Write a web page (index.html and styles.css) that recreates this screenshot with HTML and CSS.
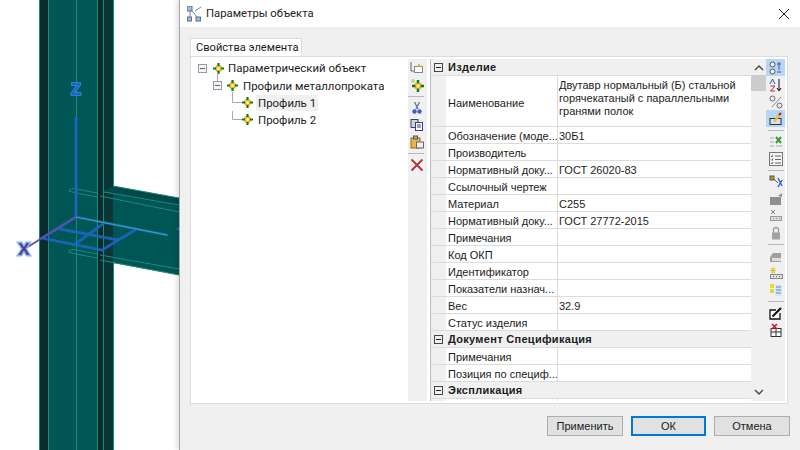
FILE: index.html
```html
<!DOCTYPE html>
<html lang="ru">
<head>
<meta charset="utf-8">
<title>Параметры объекта</title>
<link rel="stylesheet" href="styles.css">
</head>
<body>
<svg width="0" height="0" class="defs">
  <symbol id="node" viewBox="0 0 11 11">
    <circle cx="5.500" cy="5.500" r="3.500" fill="#f0b020"/>
    <circle cx="5.500" cy="5.500" r="1.500" fill="#fff4b8"/>
    <path d="M5.500 0v3M5.500 8v3M0 5.500h3M8 5.500h3" stroke="#0a7a1c" stroke-width="2.200"/>
  </symbol>
  <symbol id="minus" viewBox="0 0 9 9">
    <rect x=".5" y=".5" width="8" height="8" fill="#f2f4f7" stroke="#9a9a9a"/>
    <path d="M2 4.500h5" stroke="#4a6a9a"/>
  </symbol>
</svg>

<div class="app">
  <svg class="scene" viewBox="0 0 179 450" width="179" height="450">
    <rect x="39" y="0" width="75" height="450" fill="#005555"/>
    <rect x="40" y="0" width="8" height="450" fill="#0a2c2b"/>
    <rect x="98" y="0" width="5" height="450" fill="#0a2c2b"/>
    <rect x="104" y="0" width="9" height="450" fill="#0a3735"/>
    <polygon points="113,186 179,198 179,275 113,263" fill="#005555"/>
    <polygon points="103,192 113,186 179,198 179,206" fill="#00494a"/>
    <g stroke="#1d8a80" fill="none" stroke-width="1">
      <path d="M39.500 0V450M48.500 0V450M76.500 0V450M97.500 0V450M103.500 0V450M113.500 0V186M113.500 263V450"/>
      <path d="M113 186L179 198M100 196L179 212M104 192L179 205"/>
      <path d="M97 193L74 188.500Q68 189 69 191L76 193L97 197"/>
      <path d="M97 254L74 249.500Q68 250 69 252L76 254L97 258"/>
      <path d="M100 255L179 269M100 260L179 275"/>
    </g>
    <g stroke="#1d67c8" fill="none" stroke-width="2.800" opacity=".85" stroke-linecap="round">
      <path d="M76 118V217"/>
      <path d="M76 217L42 238L102 250L135 230"/>
      <path d="M60 229L118 240M74 245L104 223"/>
      <path d="M76 217L167 235"/>
    </g>
    <path d="M76 217L167 235" stroke="#35b09a" fill="none"/>
    <path d="M76 217L26 248" stroke="#6a4aa8" fill="none" stroke-width="1.800"/>
    <circle cx="178" cy="229" r="1.500" fill="#1d67c8"/>
    <text x="76" y="95" class="label-z">Z</text>
    <text x="24" y="255" class="label-x">X</text>
  </svg>

  <div class="dialog">
    <header class="titlebar">
      <svg class="title-icon" viewBox="0 0 15 16">
        <rect x="0" y="0" width="5" height="5" fill="#a9bad6" stroke="#5b6f94"/>
        <rect x=".5" y="11" width="4" height="4" fill="#a9bad6" stroke="#5b6f94"/>
        <rect x="9" y="11" width="4.500" height="4" fill="#a9bad6" stroke="#5b6f94"/>
        <path d="M3 5V11M5 5L10 11M8 5L14 1" stroke="#6d7fa0" fill="none"/>
      </svg>
      <span class="title-text">Параметры объекта</span>
      <svg class="close" viewBox="0 0 10 10"><path d="M0 0L10 10M10 0L0 10" stroke="#222" fill="none"/></svg>
    </header>

    <div class="content">
      <div class="tab">Свойства элемента</div>
      <div class="panel">
        <div class="tree">
          <div class="tree-row">
            <svg class="prefix p-root" viewBox="0 0 25 17">
              <use href="#minus" x="0" y="4" width="9" height="9"/>
              <use href="#node" x="15" y="3" width="11" height="11"/>
            </svg>
            <span class="node">Параметрический объект</span>
          </div>
          <div class="tree-row">
            <svg class="prefix p-group" viewBox="0 0 40 17">
              <path d="M19.500 -5V4" stroke="#aaa"/>
              <use href="#minus" x="15" y="4" width="9" height="9"/>
              <use href="#node" x="29" y="3" width="11" height="11"/>
            </svg>
            <span class="node">Профили металлопроката</span>
          </div>
          <div class="tree-row">
            <svg class="prefix p-leaf" viewBox="0 0 55 17">
              <path d="M34.500 -2V8.500H44" stroke="#aaa" fill="none"/>
              <use href="#node" x="44" y="3" width="11" height="11"/>
            </svg>
            <span class="node selected">Профиль 1</span>
          </div>
          <div class="tree-row">
            <svg class="prefix p-leaf" viewBox="0 0 55 17">
              <path d="M34.500 0V8.500H44" stroke="#aaa" fill="none"/>
              <use href="#node" x="44" y="3" width="11" height="11"/>
            </svg>
            <span class="node">Профиль 2</span>
          </div>
        </div>

        <div class="toolbar tb-left">
          <div class="slot"><svg viewBox="0 0 14 14"><path d="M1 1V10H4" stroke="#666" fill="none"/><rect x="4.500" y="5.500" width="8" height="6" fill="#fff" stroke="#888"/><path d="M8 6l1-3 1 3 2-1" stroke="#c8b020" fill="none"/></svg></div>
          <div class="slot"><svg viewBox="0 0 14 14"><use href="#node" x="2" y="2" width="12" height="12"/><circle cx="3" cy="3" r="2" fill="#cfcf90"/></svg></div>
          <div class="sep"></div>
          <div class="slot"><svg viewBox="0 0 14 14"><path d="M4.500 1L8 8M9.500 1L6 8" stroke="#6a7a96" stroke-width="1.400" fill="none"/><circle cx="4.500" cy="10.500" r="2.200" fill="#3f5fc0"/><circle cx="9.500" cy="10.500" r="2.200" fill="#3f5fc0"/></svg></div>
          <div class="slot"><svg viewBox="0 0 14 14"><rect x="1" y="1.500" width="7" height="8" fill="#cfd4dc" stroke="#444"/><rect x="5.500" y="4.500" width="7" height="8" fill="#fff" stroke="#2a3f9a"/><path d="M7 7h4M7 9h4" stroke="#2a3f9a"/></svg></div>
          <div class="slot"><svg viewBox="0 0 14 14"><rect x="1" y="3" width="9" height="10" fill="#e6b84a" stroke="#8a6a20"/><rect x="3.500" y="1" width="4" height="3" fill="#aaa" stroke="#555"/><rect x="6.500" y="7" width="7" height="6" fill="#eee" stroke="#666"/></svg></div>
          <div class="sep"></div>
          <div class="slot"><svg viewBox="0 0 14 14"><path d="M1.500 1.500L12.500 12.500M12.500 1.500L1.500 12.500" stroke="#b03034" stroke-width="1.800" fill="none"/></svg></div>
        </div>

        <div class="grid">
          <div class="row head"><span class="gutter"><svg class="exp" viewBox="0 0 9 9"><rect x=".5" y=".5" width="8" height="8" fill="none" stroke="#444"/><path d="M2 4.500h5" stroke="#222"/></svg></span><span class="head-title">Изделие</span></div>
          <div class="row tall"><span class="gutter"></span><span class="name">Наименование</span><span class="val multi">Двутавр нормальный (Б) стальной горячекатаный с параллельными гранями полок</span></div>
          <div class="row"><span class="gutter"></span><span class="name">Обозначение (моде...</span><span class="val">30Б1</span></div>
          <div class="row"><span class="gutter"></span><span class="name">Производитель</span><span class="val"></span></div>
          <div class="row"><span class="gutter"></span><span class="name">Нормативный доку...</span><span class="val">ГОСТ 26020-83</span></div>
          <div class="row"><span class="gutter"></span><span class="name">Ссылочный чертеж</span><span class="val"></span></div>
          <div class="row"><span class="gutter"></span><span class="name">Материал</span><span class="val">С255</span></div>
          <div class="row"><span class="gutter"></span><span class="name">Нормативный доку...</span><span class="val">ГОСТ 27772-2015</span></div>
          <div class="row"><span class="gutter"></span><span class="name">Примечания</span><span class="val"></span></div>
          <div class="row"><span class="gutter"></span><span class="name">Код ОКП</span><span class="val"></span></div>
          <div class="row"><span class="gutter"></span><span class="name">Идентификатор</span><span class="val"></span></div>
          <div class="row"><span class="gutter"></span><span class="name">Показатели назнач...</span><span class="val"></span></div>
          <div class="row"><span class="gutter"></span><span class="name">Вес</span><span class="val">32.9</span></div>
          <div class="row"><span class="gutter"></span><span class="name">Статус изделия</span><span class="val"></span></div>
          <div class="row head"><span class="gutter"><svg class="exp" viewBox="0 0 9 9"><rect x=".5" y=".5" width="8" height="8" fill="none" stroke="#444"/><path d="M2 4.500h5" stroke="#222"/></svg></span><span class="head-title">Документ Спецификация</span></div>
          <div class="row"><span class="gutter"></span><span class="name">Примечания</span><span class="val"></span></div>
          <div class="row"><span class="gutter"></span><span class="name">Позиция по специф...</span><span class="val"></span></div>
          <div class="row head"><span class="gutter"><svg class="exp" viewBox="0 0 9 9"><rect x=".5" y=".5" width="8" height="8" fill="none" stroke="#444"/><path d="M2 4.500h5" stroke="#222"/></svg></span><span class="head-title">Экспликация</span></div>
          <div class="row rest"><span class="gutter"></span><span class="name"></span><span class="val"></span></div>
        </div>

        <div class="scrollbar">
          <svg class="chev" viewBox="0 0 10 6"><path d="M1 5L5 1L9 5" stroke="#444" stroke-width="1.400" fill="none"/></svg>
          <div class="thumb"></div>
          <svg class="chev chev-down" viewBox="0 0 10 6"><path d="M1 1L5 5L9 1" stroke="#444" stroke-width="1.400" fill="none"/></svg>
        </div>

        <div class="toolbar tb-right">
          <div class="slot active"><svg viewBox="0 0 14 14"><circle cx="3.500" cy="3.500" r="2.500" fill="#eee" stroke="#555"/><circle cx="3.500" cy="10.500" r="2.500" fill="#eee" stroke="#555"/><path d="M8 3h4M8 11h4M10 1v8" stroke="#3a5a90" fill="none"/></svg></div>
          <div class="slot"><svg viewBox="0 0 14 14"><path d="M10 1V12M8 10l2 3 2-3" stroke="#111" fill="none"/><path d="M1 6L3.500 1L6 6" stroke="#2a50c8" fill="none"/><path d="M1.500 8H6L1.500 13H6" stroke="#c02838" fill="none"/></svg></div>
          <div class="slot"><svg viewBox="0 0 14 14"><circle cx="3.500" cy="3.500" r="2.500" fill="#eee" stroke="#666"/><circle cx="10.500" cy="10.500" r="2.500" fill="#eee" stroke="#666"/><path d="M3 12L12 2" stroke="#888" fill="none"/></svg></div>
          <div class="slot active"><svg viewBox="0 0 14 14"><rect x="1" y="6.500" width="11" height="6" fill="#cfe3f5" stroke="#333"/><path d="M5 10L11 2" stroke="#e8c030" stroke-width="2.400"/><path d="M10 3L12 1" stroke="#d02030" stroke-width="2.400"/></svg></div>
          <div class="sep"></div>
          <div class="slot"><svg viewBox="0 0 14 14"><path d="M1 3h4M1 7h4M1 11h4M7 11h6" stroke="#aaa" fill="none"/><path d="M7 2L12 8M12 2L7 8" stroke="#3c9a3c" stroke-width="2" fill="none"/></svg></div>
          <div class="slot"><svg viewBox="0 0 14 14"><rect x=".5" y=".5" width="13" height="13" fill="#f4f4f4" stroke="#777"/><path d="M2 4l1 1 1-2M2 7.500l1 1 1-2M2 11l1 1 1-2M6 4h6M6 7.500h6M6 11h6" stroke="#666" fill="none"/></svg></div>
          <div class="sep"></div>
          <div class="slot"><svg viewBox="0 0 14 14"><rect x="1" y="1" width="4" height="4" fill="#b8a020" stroke="#555"/><path d="M5 4L9 8" stroke="#555"/><path d="M9 3L13 11M13 5L9 12" stroke="#3060d0" stroke-width="1.400" fill="none"/></svg></div>
          <div class="slot"><svg viewBox="0 0 14 14"><rect x="1" y="5" width="11" height="8" fill="#8f8f8f"/><path d="M9 4L13 1V5Z" fill="#8f8f8f"/></svg></div>
          <div class="slot"><svg viewBox="0 0 14 14"><path d="M2 1L6 5M6 1L2 5" stroke="#888" fill="none"/><rect x="1.500" y="7.500" width="11" height="4" fill="#ddd" stroke="#999"/><path d="M4 9.500h1M7 9.500h1M10 9.500h1" stroke="#888"/></svg></div>
          <div class="slot"><svg viewBox="0 0 14 14"><path d="M4.500 7V4a2.500 2.500 0 0 1 5 0V7" stroke="#a2a2a2" stroke-width="1.400" fill="none"/><rect x="3" y="6.500" width="8" height="7" fill="#a2a2a2"/></svg></div>
          <div class="sep"></div>
          <div class="slot"><svg viewBox="0 0 14 14"><path d="M1 13V8L4 4H12V13Z" fill="#a0a0a0"/><rect x="3" y="9" width="9" height="3" fill="#ddd"/></svg></div>
          <div class="slot"><svg viewBox="0 0 14 14"><path d="M4 1V8M1 4.500H7M2 2l4 5M6 2L2 7" stroke="#d8c020" fill="none"/><rect x="1.500" y="8.500" width="12" height="4" fill="#dde3ee" stroke="#888"/><path d="M4 10.500h1M7 10.500h1M10 10.500h1" stroke="#4060a0"/></svg></div>
          <div class="slot"><svg viewBox="0 0 14 14"><rect x="1" y="1" width="4" height="4" fill="#e8d830"/><rect x="1" y="6" width="4" height="4" fill="#e8d830"/><rect x="6" y="2" width="7" height="11" fill="#dbe6f2"/><path d="M7 4h5M7 7h5M7 10h5" stroke="#4a8ad8"/></svg></div>
          <div class="sep"></div>
          <div class="slot"><svg viewBox="0 0 14 14"><path d="M11 7V13H1V4H7" fill="#fff" stroke="#111" stroke-width="1.300"/><path d="M3.500 10.500L12 2" stroke="#111" stroke-width="2.200"/></svg></div>
          <div class="slot"><svg viewBox="0 0 14 14"><rect x="2" y="5.500" width="10" height="8" fill="#fff" stroke="#333"/><path d="M2 9h10M7 5.500v8" stroke="#333"/><path d="M3 1L8 6M8 1L3 6" stroke="#d81820" stroke-width="1.600"/></svg></div>
        </div>
      </div>

      <footer class="buttons">
        <button class="btn" type="button">Применить</button>
        <button class="btn primary" type="button">ОК</button>
        <button class="btn" type="button">Отмена</button>
      </footer>
    </div>
  </div>
</div>
</body>
</html>
```

FILE: styles.css
```css
* { box-sizing: border-box; }
html, body { margin: 0; padding: 0; }
body {
  width: 800px;
  height: 450px;
  overflow: hidden;
  background: #fff;
  font-family: Roboto, "Noto Sans", sans-serif;
  color: #1c1c1c;
}
.defs { display: block; height: 0; }
.app { display: flex; width: 800px; height: 450px; }
.scene { flex: none; display: block; filter: blur(.4px); }

.label-z, .label-x {
  font-family: "Liberation Sans", sans-serif;
  font-weight: 700;
  text-anchor: middle;
  paint-order: stroke;
}
.label-z { font-size: 17px; fill: #1568c8; stroke: #3f8ae0; stroke-width: 1.600; }
.label-x { font-size: 17px; fill: #5a3a90; stroke: #8ab8f0; stroke-width: 3; }

.dialog {
  flex: 1;
  display: flex;
  flex-direction: column;
  background: #f0f0f0;
  border-left: 1px solid #a6a6a6;
  box-shadow: -3px 0 4px rgba(0, 0, 0, .10);
  position: relative;
}
.titlebar {
  height: 27px;
  background: #fff;
  display: flex;
  align-items: center;
  padding: 0 11px 0 7px;
  flex: none;
}
.title-icon { width: 15px; height: 16px; margin-right: 4px; filter: blur(.3px); }
.title-text { font-size: 11.300px; flex: 1; }
.close { width: 10px; height: 10px; }

.content { flex: 1; display: flex; flex-direction: column; padding: 11px 10px 0 10px; }
.tab {
  width: 112px;
  height: 18px;
  background: #fff;
  border: 1px solid #dcdcdc;
  border-bottom: 0;
  font-size: 11.100px;
  line-height: 17px;
  padding-left: 5px;
  white-space: nowrap;
}
.panel {
  display: flex;
  height: 348px;
  width: 598px;
  background: #fff;
  border: 1px solid #dcdcdc;
  padding: 2px 1px 2px 0;
}
.tree { width: 217px; flex: none; }
.tree-row { display: flex; align-items: center; height: 17px; font-size: 11.450px; white-space: nowrap; }
.tree-row:nth-child(1) { height: 18px; }
.prefix { flex: none; height: 17px; margin-left: 7px; overflow: visible; filter: blur(.25px); }
.p-root { width: 25px; }
.p-group { width: 40px; }
.p-leaf { width: 55px; }
.node { padding: 0 2px; margin-left: 3px; line-height: 16px; }
.tree-row .selected { background: #f0f0f0; }

.toolbar { display: flex; flex-direction: column; flex: none; background: #f0f0f0; align-items: center; }
.tb-left { width: 19px; margin-right: 3px; align-items: flex-start; }
.tb-left .slot { width: 17px; }
.tb-right { width: 19px; margin-left: -1px; }
.slot { width: 19px; height: 17px; display: flex; align-items: center; justify-content: center; flex: none; }
.slot svg { width: 14px; height: 14px; display: block; filter: blur(.35px); }
.slot.active { background: #b5d7f5; }
.sep { height: 6px; width: 16px; flex: none; display: flex; align-items: center; }
.sep::before { content: ""; display: block; width: 100%; height: 1px; background: #b9b9b9; }

.grid {
  width: 321px;
  flex: none;
  display: flex;
  flex-direction: column;
  font-family: "Liberation Sans", sans-serif;
  font-size: 11px;
  border-left: 1px solid #bdbdbd;
  background: #fff;
}
.row { display: flex; height: 17px; border-bottom: 1px solid #dcdcdc; flex: none; align-items: stretch; line-height: 16px; }
.row.tall { height: 51px; }
.row.rest { flex: 1; height: auto; border-bottom: 0; }
.gutter { width: 15px; background: #f0f0f0; flex: none; display: flex; align-items: center; justify-content: center; }
.exp { width: 9px; height: 9px; }
.name { width: 112px; padding: 2px 0 0 2px; border-right: 1px solid #dcdcdc; white-space: nowrap; overflow: hidden; flex: none; display: flex; align-items: center; }
.row.tall .name { padding-top: 4px; }
.val { flex: 1; padding: 1px 0 0 1px; white-space: nowrap; }
.val.multi { white-space: normal; line-height: 13px; padding: 3px 8px 0 1px; }
.row.head { background: #f0f0f0; }
.head-title { font-weight: 700; padding-left: 2px; letter-spacing: .3px; white-space: nowrap; }

.scrollbar { width: 16px; flex: none; background: #f0f0f0; display: flex; flex-direction: column; align-items: center; }
.chev { width: 10px; height: 6px; flex: none; margin-top: 6px; }
.thumb { width: 16px; height: 16px; background: #cdcdcd; margin-top: 4px; flex: none; }
.chev-down { margin-top: auto; margin-bottom: 6px; }

.buttons { display: flex; justify-content: flex-end; gap: 8px; padding-top: 12px; }
.btn {
  width: 76px;
  height: 20px;
  padding: 0;
  background: #e1e1e1;
  border: 1px solid #adadad;
  font-family: "Liberation Sans", sans-serif;
  font-size: 11px;
  color: #1c1c1c;
  line-height: 16px;
}
.btn.primary { border: 2px solid #0078d7; width: 75px; }
```
